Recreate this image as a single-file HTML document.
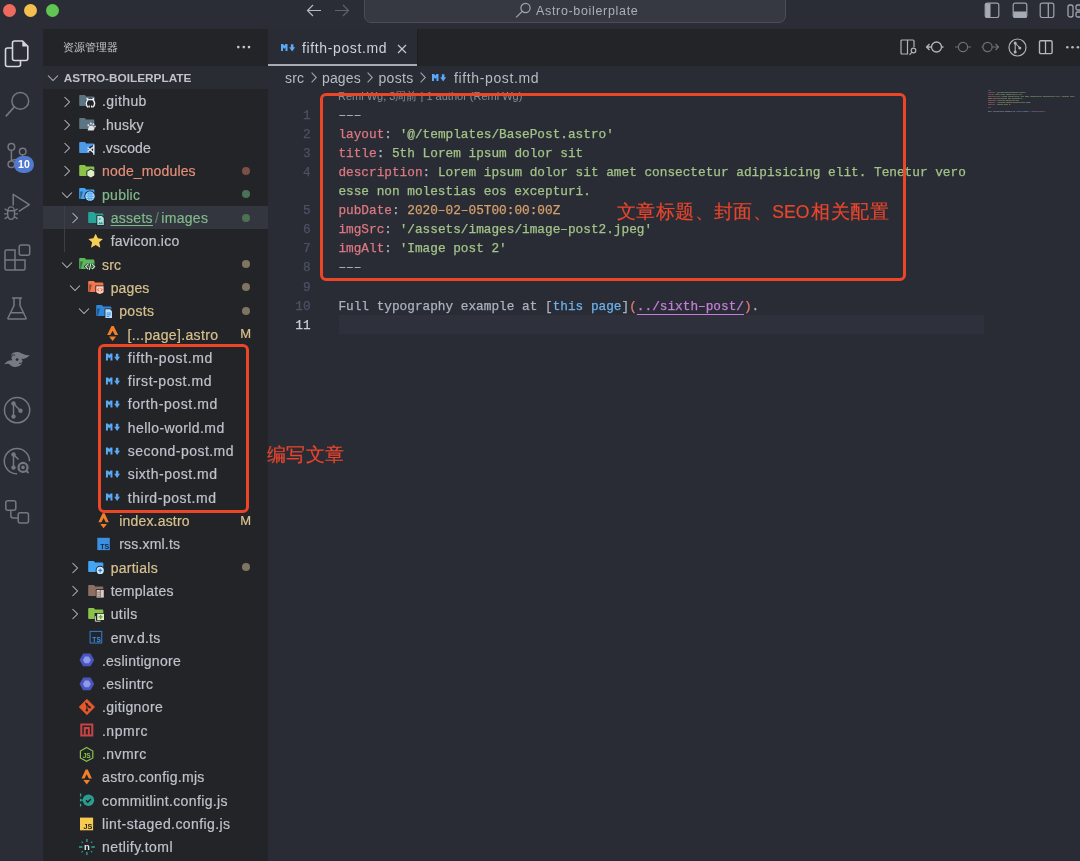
<!DOCTYPE html>
<html><head><meta charset="utf-8"><style>
*{margin:0;padding:0;box-sizing:border-box}
html,body{width:1080px;height:861px;overflow:hidden;background:#292c35;font-family:"Liberation Sans",sans-serif}
.a{position:absolute}
#root{position:absolute;left:0;top:0;width:1080px;height:861px;will-change:transform}
.ic{position:absolute;line-height:0}
.ic svg{display:block;overflow:visible}
.rt{position:absolute;font-size:14px;line-height:18px;white-space:pre;letter-spacing:0.5px;-webkit-text-stroke:0.2px currentColor}
.ln{position:absolute;left:279.6px;width:31px;text-align:right;font-family:"Liberation Mono",monospace;font-size:12.76px;line-height:19px;white-space:pre;-webkit-text-stroke:0.25px currentColor}
.cl{position:absolute;left:338.4px;font-family:"Liberation Mono",monospace;font-size:12.76px;line-height:19px;white-space:pre;-webkit-text-stroke:0.25px currentColor}
.ab svg{position:absolute;overflow:visible}
</style></head><body><div id="root">
<!-- title bar -->
<div class="a" style="left:0;top:0;width:1080px;height:29px;background:#2a2d36"></div>
<div class="a" style="left:3px;top:4px;width:13px;height:13px;border-radius:50%;background:#ee6a5f"></div>
<div class="a" style="left:24px;top:4px;width:13px;height:13px;border-radius:50%;background:#f5bf4f"></div>
<div class="a" style="left:45.5px;top:4px;width:13px;height:13px;border-radius:50%;background:#61c554"></div>
<svg class="a" style="left:306px;top:4px" width="16" height="13" viewBox="0 0 16 13"><path d="M1.5 6.5H15M7 1 1.5 6.5 7 12" fill="none" stroke="#b5b8bf" stroke-width="1.2"/></svg>
<svg class="a" style="left:334px;top:4px" width="16" height="13" viewBox="0 0 16 13"><path d="M1 6.5H14.5M9 1 14.5 6.5 9 12" fill="none" stroke="#5f626a" stroke-width="1.2"/></svg>
<div class="a" style="left:364px;top:-8px;width:422px;height:31px;border-radius:7px;background:#363942;border:1px solid #4a4d55"></div>
<svg class="a" style="left:515px;top:2px" width="17" height="16" viewBox="0 0 17 16"><circle cx="10.5" cy="6" r="4.6" fill="none" stroke="#a2a5ad" stroke-width="1.2"/><path d="M7.2 9.3 1.2 15.3" stroke="#a2a5ad" stroke-width="1.2"/></svg>
<div class="a" style="left:536px;top:3px;font-size:12.5px;line-height:16px;color:#acafb7;letter-spacing:0.67px">Astro-boilerplate</div>
<!-- layout icons -->
<svg class="a" style="left:984px;top:2px" width="16" height="16" viewBox="0 0 16 16"><rect x="1.2" y="1.2" width="13.6" height="14.3" rx="2" fill="none" stroke="#9fa3ad" stroke-width="1.2"/><path d="M1.5 1.5H6.5V15.5H1.5Z" fill="#a6aab5"/></svg>
<svg class="a" style="left:1012px;top:2px" width="16" height="16" viewBox="0 0 16 16"><rect x="1.2" y="1.2" width="13.6" height="14.3" rx="2" fill="none" stroke="#9fa3ad" stroke-width="1.2"/><path d="M1.5 9.5H14.5V15.5H1.5Z" fill="#a6aab5"/></svg>
<svg class="a" style="left:1039px;top:2px" width="16" height="16" viewBox="0 0 16 16"><rect x="1.2" y="1.2" width="13.6" height="14.3" rx="2" fill="none" stroke="#9fa3ad" stroke-width="1.2"/><path d="M9.3 1V16" stroke="#9fa3ad" stroke-width="1.3"/></svg>
<svg class="a" style="left:1067px;top:2px" width="16" height="16" viewBox="0 0 16 16"><rect x="1" y="3" width="5" height="12" rx="2" fill="none" stroke="#9fa3ad" stroke-width="1.3"/><rect x="9" y="3" width="7" height="5" rx="1.5" fill="none" stroke="#9fa3ad" stroke-width="1.3"/><rect x="9" y="10" width="7" height="5" rx="1.5" fill="none" stroke="#9fa3ad" stroke-width="1.3"/></svg>

<!-- activity bar -->
<div class="a" style="left:0;top:29px;width:43px;height:832px;background:#2a2d36"></div>
<div class="ab">
<svg style="left:4px;top:40px" width="25" height="28" viewBox="0 0 25 28"><path d="M8.6 8H3.5Q1.5 8 1.5 10V24.5Q1.5 26.5 3.5 26.5H14.5Q16.5 26.5 16.5 24.5V20.5" fill="none" stroke="#d6d7da" stroke-width="1.6"/><path d="M10.5 1H18.5L23.8 6.3V18.5Q23.8 20.5 21.8 20.5H10.5Q8.5 20.5 8.5 18.5V3Q8.5 1 10.5 1Z" fill="none" stroke="#d6d7da" stroke-width="1.6"/><path d="M18.3 1.5V6.5H23.3Z" fill="#d6d7da"/></svg>
<svg style="left:4px;top:90px" width="26" height="28" viewBox="0 0 26 28"><circle cx="16.3" cy="10.9" r="8.4" fill="none" stroke="#75787f" stroke-width="1.5"/><path d="M10.3 16.9 1.8 26.4" stroke="#75787f" stroke-width="1.6"/></svg>
<svg style="left:6px;top:140px" width="24" height="28" viewBox="0 0 24 28"><circle cx="5.4" cy="6.9" r="3.3" fill="none" stroke="#75787f" stroke-width="1.5"/><circle cx="16.7" cy="11.5" r="3.3" fill="none" stroke="#75787f" stroke-width="1.5"/><circle cx="5.4" cy="24.3" r="3.3" fill="none" stroke="#75787f" stroke-width="1.5"/><path d="M5.4 10.2V21M16.7 14.8Q16.7 19 11 19.5 5.4 20 5.4 21" fill="none" stroke="#75787f" stroke-width="1.5"/></svg>
<div class="a" style="left:14.2px;top:155.8px;width:19.8px;height:17.2px;border-radius:9px;background:#5179cf;color:#fff;font-size:10.5px;font-weight:700;line-height:17.2px;text-align:center;letter-spacing:0.2px">10</div>
<svg style="left:3px;top:193px" width="28" height="28" viewBox="0 0 28 28"><path d="M10.2 12.6V1.3L26.3 11.7 15.8 18.4" fill="none" stroke="#75787f" stroke-width="1.5" stroke-linejoin="round"/><path d="M4.9 17.8A3.2 3.9 0 0 1 11.3 17.8M4.1 17.8H12.1M4.7 17.8V21.6A3.4 4.8 0 0 0 11.5 21.6V17.8M1.6 15.7 4.4 17.8M1.2 20.9H4.4M1.6 25.8 4.5 23.9M14.6 15.7 11.8 17.8M15 20.9H11.8M14.6 25.8 11.7 23.9" fill="none" stroke="#75787f" stroke-width="1.4"/></svg>
<svg style="left:4px;top:244px" width="27" height="28" viewBox="0 0 27 28"><path d="M2.5 6H10.5V16H20.5V24.5Q20.5 26 19 26H2Q0.5 26 0.5 24.5V7.5Q0.5 6 2 6Z" fill="none" stroke="#75787f" stroke-width="1.5" transform="translate(0.5 0)"/><path d="M1 16H11M11 16V26" stroke="#75787f" stroke-width="1.5"/><rect x="15.2" y="1" width="10.5" height="10.3" rx="2" fill="none" stroke="#75787f" stroke-width="1.5"/></svg>
<svg style="left:7px;top:296px" width="22" height="26" viewBox="0 0 22 26"><path d="M5 2H15M7 2V9.5L1 22Q0.5 23 1.5 23H18.5Q19.5 23 19 22L13 9.5V2M3.5 16.8H16.5" fill="none" stroke="#75787f" stroke-width="1.5"/></svg>
<svg style="left:0px;top:345px" width="36" height="30" viewBox="0 0 36 30"><path d="M10.8 10.8C12 7.2 15.5 6.7 18 7C21.5 7.5 24.5 11 29.6 10.1C27.8 12.8 25 14.3 21.3 13.8C23.5 16 22 19.5 20 20.6C17 22.8 12.5 22.2 10.5 20.2C8.5 18.2 6.5 18.6 4.2 19.5C6 16.5 9 15 12.5 15.3C11 13.5 11 12 12.8 10.5C12 10.4 11.3 10.5 10.8 10.8Z" fill="#777a82"/><circle cx="17.1" cy="14.6" r="1.4" fill="#2a2d36"/><path d="M11.8 10.4Q13.5 9.6 15.2 10.2M19 18.4Q20.8 18.6 22.4 17.6" fill="none" stroke="#2a2d36" stroke-width="0.9"/></svg>
<svg style="left:3px;top:396px" width="28" height="28" viewBox="0 0 28 28"><circle cx="14.1" cy="14.2" r="12.6" fill="none" stroke="#75787f" stroke-width="1.5"/><circle cx="10.5" cy="7.4" r="2.2" fill="#75787f"/><circle cx="10.5" cy="20.6" r="2.2" fill="#75787f"/><circle cx="17.5" cy="14.8" r="2.2" fill="#75787f"/><path d="M10.5 7.4V20.6M10.5 7.4 17.5 14.8" stroke="#75787f" stroke-width="1.5"/></svg>
<svg style="left:3px;top:447px" width="28" height="28" viewBox="0 0 28 28"><path d="M26.5 14.2A12.6 12.6 0 1 0 14.1 26.8" fill="none" stroke="#75787f" stroke-width="1.5"/><circle cx="10.5" cy="7.4" r="2.2" fill="#75787f"/><circle cx="10.5" cy="20.6" r="2.2" fill="#75787f"/><path d="M10.5 7.4V20.6M10.5 7.4 15.5 12.5" stroke="#75787f" stroke-width="1.5"/><circle cx="20" cy="20.4" r="4.5" fill="none" stroke="#75787f" stroke-width="2.2"/><circle cx="20" cy="20.4" r="1.8" fill="#75787f"/><path d="M23 23.5 25.5 26" stroke="#75787f" stroke-width="1.8"/></svg>
<svg style="left:5px;top:500px" width="25" height="25" viewBox="0 0 25 25"><rect x="0.8" y="0.8" width="10" height="9.5" rx="2" fill="none" stroke="#75787f" stroke-width="1.5"/><rect x="13.2" y="12.8" width="10.3" height="10.3" rx="2" fill="none" stroke="#75787f" stroke-width="1.5"/><path d="M5.8 10.3V15.5Q5.8 18 8.3 18H13.2" fill="none" stroke="#75787f" stroke-width="1.5"/></svg>
</div>

<!-- sidebar -->
<div class="a" style="left:43px;top:29px;width:225px;height:832px;background:#222428"></div>
<div class="a" style="left:63.4px;top:39.3px;font-size:11.45px;line-height:16px;color:#c4c6cc">资源管理器</div>
<svg class="a" style="left:230px;top:40px" width="26" height="14" viewBox="0 0 26 14"><circle cx="8.3" cy="7.1" r="1.3" fill="#c8cad0"/><circle cx="13.8" cy="7.1" r="1.3" fill="#c8cad0"/><circle cx="19" cy="7.1" r="1.3" fill="#c8cad0"/></svg>
<div class="a" style="left:43px;top:65.8px;width:225px;height:23.6px;background:#2a2c33"></div>
<div class="ic" style="left:47px;top:73.5px"><svg width="12" height="8" viewBox="0 0 12 8"><path d="M1 1.5 6 6.5 11 1.5" fill="none" stroke="#b4b6bc" stroke-width="1.05"/></svg></div>
<div class="a" style="left:63.8px;top:70px;font-size:11.8px;font-weight:700;line-height:16px;color:#c0c2c8">ASTRO-BOILERPLATE</div>
<div class="ic" style="left:62.70px;top:95.50px"><svg width="8" height="12" viewBox="0 0 8 12"><path d="M1.5 1 6.5 6 1.5 11" fill="none" stroke="#b4b6bc" stroke-width="1.05"/></svg></div><div class="ic" style="left:79.10px;top:93.00px"><svg width="20" height="16" viewBox="0 0 20 16"><path d="M0.2 2.9Q0.2 2.1 1 2.1H5.8L7.1 3.4H14.5Q15.3 3.4 15.3 4.2V12.2Q15.3 13 14.5 13H1Q0.2 13 0.2 12.2Z" fill="#5d7482"/><circle cx="11.4" cy="10" r="5.3" fill="#222428"/><path d="M9.3 14.2Q7.2 13.2 7.2 10.4Q7.2 8.6 8.4 7.5L8.3 5.7 9.9 6.6Q11.4 6.2 12.9 6.6L14.5 5.7 14.4 7.5Q15.6 8.6 15.6 10.4Q15.6 13.2 13.5 14.2" fill="none" stroke="#eef0f3" stroke-width="1.5"/><path d="M10.2 14.5V12.6M12.6 14.5V12.6" stroke="#eef0f3" stroke-width="1.3"/></svg></div><div class="rt" style="left:101.90px;top:92.40px;color:#bfc2ca;letter-spacing:0.409px">.github</div><div class="ic" style="left:62.70px;top:118.81px"><svg width="8" height="12" viewBox="0 0 8 12"><path d="M1.5 1 6.5 6 1.5 11" fill="none" stroke="#b4b6bc" stroke-width="1.05"/></svg></div><div class="ic" style="left:79.10px;top:116.31px"><svg width="20" height="16" viewBox="0 0 20 16"><path d="M0.2 2.9Q0.2 2.1 1 2.1H5.8L7.1 3.4H14.5Q15.3 3.4 15.3 4.2V12.2Q15.3 13 14.5 13H1Q0.2 13 0.2 12.2Z" fill="#5d7482"/><path d="M8.6 14.6 10 10.2 13.2 9.6 15.8 11.8 14.6 14.6Z" fill="#e0e3e6"/><circle cx="9.4" cy="9.2" r="1" fill="#e0e3e6"/><circle cx="11.8" cy="7.6" r="1" fill="#e0e3e6"/><circle cx="14.4" cy="8.2" r="1" fill="#e0e3e6"/><circle cx="16" cy="10.4" r="0.9" fill="#e0e3e6"/></svg></div><div class="rt" style="left:101.90px;top:115.71px;color:#bfc2ca;letter-spacing:0.228px">.husky</div><div class="ic" style="left:62.70px;top:142.12px"><svg width="8" height="12" viewBox="0 0 8 12"><path d="M1.5 1 6.5 6 1.5 11" fill="none" stroke="#b4b6bc" stroke-width="1.05"/></svg></div><div class="ic" style="left:79.10px;top:139.62px"><svg width="20" height="16" viewBox="0 0 20 16"><path d="M0.2 2.9Q0.2 2.1 1 2.1H5.8L7.1 3.4H14.5Q15.3 3.4 15.3 4.2V12.2Q15.3 13 14.5 13H1Q0.2 13 0.2 12.2Z" fill="#4d9be8"/><path d="M9 7.8 15.6 4.2V15.2L9 11.8Z" fill="#222428"/><path d="M8.6 11.6 14.8 6.6M8.6 7.6 14.8 12.8M14.8 4.6V14.8" stroke="#dfeafb" stroke-width="1.4" fill="none"/></svg></div><div class="rt" style="left:101.90px;top:139.02px;color:#bfc2ca;letter-spacing:0.09px">.vscode</div><div class="ic" style="left:62.70px;top:165.43px"><svg width="8" height="12" viewBox="0 0 8 12"><path d="M1.5 1 6.5 6 1.5 11" fill="none" stroke="#b4b6bc" stroke-width="1.05"/></svg></div><div class="ic" style="left:79.10px;top:162.93px"><svg width="20" height="16" viewBox="0 0 20 16"><path d="M0.2 2.9Q0.2 2.1 1 2.1H5.8L7.1 3.4H14.5Q15.3 3.4 15.3 4.2V12.2Q15.3 13 14.5 13H1Q0.2 13 0.2 12.2Z" fill="#8bc34a"/><path d="M11.8 5.6 16.2 8.1V13.1L11.8 15.6 7.4 13.1V8.1Z" fill="#222428"/><path d="M11.8 6.6 15.3 8.6V12.6L11.8 14.6 8.3 12.6V8.6Z" fill="#dcedc8"/></svg></div><div class="rt" style="left:102.10px;top:162.33px;color:#e58e78;letter-spacing:0.15px">node_modules</div><div style="position:absolute;left:242px;top:166.93px;width:8px;height:8px;border-radius:50%;background:#7d4f49"></div><div class="ic" style="left:60.50px;top:190.74px"><svg width="12" height="8" viewBox="0 0 12 8"><path d="M1 1.5 6 6.5 11 1.5" fill="none" stroke="#b4b6bc" stroke-width="1.05"/></svg></div><div class="ic" style="left:79.10px;top:186.24px"><svg width="20" height="16" viewBox="0 0 20 16"><path d="M0.2 2.9Q0.2 2.1 1 2.1H5.8L7.1 3.4H14.5Q15.3 3.4 15.3 4.2V12.2Q15.3 13 14.5 13H1Q0.2 13 0.2 12.2Z" fill="#42a5f5"/><path d="M1.2 5.4H4.4L2.1 13H1.2Z" fill="#15171a" opacity="0.45"/><path d="M3.9 5.4H15.3V12.2Q15.3 13 14.5 13H2Z" fill="#42a5f5"/><circle cx="11" cy="10.2" r="5.6" fill="#222428"/><circle cx="11" cy="10.2" r="4.7" fill="#d2e7fb"/><path d="M6.3 10.2H15.7M11 5.5V14.9M7 7.8H15M7 12.6H15" stroke="#42a5f5" stroke-width="0.9"/><ellipse cx="11" cy="10.2" rx="2" ry="4.6" fill="none" stroke="#42a5f5" stroke-width="0.9"/></svg></div><div class="rt" style="left:102.10px;top:185.64px;color:#81b88b;letter-spacing:0.244px">public</div><div style="position:absolute;left:242px;top:190.24px;width:8px;height:8px;border-radius:50%;background:#4d7157"></div><div style="position:absolute;left:43px;top:205.95px;width:225px;height:23.31px;background:#33363e"></div><div class="ic" style="left:71.25px;top:212.05px"><svg width="8" height="12" viewBox="0 0 8 12"><path d="M1.5 1 6.5 6 1.5 11" fill="none" stroke="#b4b6bc" stroke-width="1.05"/></svg></div><div class="ic" style="left:87.65px;top:209.55px"><svg width="20" height="16" viewBox="0 0 20 16"><path d="M0.2 2.9Q0.2 2.1 1 2.1H5.8L7.1 3.4H14.5Q15.3 3.4 15.3 4.2V12.2Q15.3 13 14.5 13H1Q0.2 13 0.2 12.2Z" fill="#26a69a"/><path d="M8.4 5.2H14.2L16.6 7.6V15.8H8.4Z" fill="#222428"/><path d="M9.3 6H13.8L15.8 8V15H9.3Z" fill="#b2dfdb"/><path d="M10 14.2 11.6 11.8 12.8 13 13.8 11.6 15.1 14.2Z" fill="#26a69a"/><circle cx="11.8" cy="9" r="1" fill="#26a69a"/></svg></div><div class="rt" style="left:110.65px;top:208.95px;color:#81b88b;letter-spacing:0.3px"><span style="text-decoration:underline;text-underline-offset:2px;text-decoration-thickness:1px">assets</span><span style="color:#5f7d66;margin:0 2.2px 0 2px">/</span>images</div><div style="position:absolute;left:242px;top:213.55px;width:8px;height:8px;border-radius:50%;background:#4d7157"></div><div class="ic" style="left:87.65px;top:232.86px"><svg width="20" height="16" viewBox="0 0 20 16"><path d="M7.65 0.7 9.9 5.3 14.95 5.9 11.2 9.3 12.3 14.8 7.65 12.1 3 14.8 4.1 9.3 0.35 5.9 5.4 5.3Z" fill="#f6ce55"/></svg></div><div class="rt" style="left:110.65px;top:232.26px;color:#bfc2ca;letter-spacing:0.244px">favicon.ico</div><div class="ic" style="left:60.50px;top:260.67px"><svg width="12" height="8" viewBox="0 0 12 8"><path d="M1 1.5 6 6.5 11 1.5" fill="none" stroke="#b4b6bc" stroke-width="1.05"/></svg></div><div class="ic" style="left:79.10px;top:256.17px"><svg width="20" height="16" viewBox="0 0 20 16"><path d="M0.2 2.9Q0.2 2.1 1 2.1H5.8L7.1 3.4H14.5Q15.3 3.4 15.3 4.2V12.2Q15.3 13 14.5 13H1Q0.2 13 0.2 12.2Z" fill="#5cb85c"/><path d="M1.2 5.4H4.4L2.1 13H1.2Z" fill="#15171a" opacity="0.45"/><path d="M3.9 5.4H15.3V12.2Q15.3 13 14.5 13H2Z" fill="#5cb85c"/><path d="M9 8.2 6.6 10.6 9 13M13.2 8.2 15.6 10.6 13.2 13M11.9 7.4 10.3 13.8" stroke="#222428" stroke-width="2.6" fill="none"/><path d="M9 8.2 6.6 10.6 9 13M13.2 8.2 15.6 10.6 13.2 13M11.9 7.4 10.3 13.8" stroke="#c8e6c9" stroke-width="1.2" fill="none"/></svg></div><div class="rt" style="left:102.10px;top:255.57px;color:#d7c08d;letter-spacing:0.169px">src</div><div style="position:absolute;left:242px;top:260.17px;width:8px;height:8px;border-radius:50%;background:#7f7461"></div><div class="ic" style="left:69.05px;top:283.98px"><svg width="12" height="8" viewBox="0 0 12 8"><path d="M1 1.5 6 6.5 11 1.5" fill="none" stroke="#b4b6bc" stroke-width="1.05"/></svg></div><div class="ic" style="left:87.65px;top:279.48px"><svg width="20" height="16" viewBox="0 0 20 16"><path d="M0.2 2.9Q0.2 2.1 1 2.1H5.8L7.1 3.4H14.5Q15.3 3.4 15.3 4.2V12.2Q15.3 13 14.5 13H1Q0.2 13 0.2 12.2Z" fill="#f4774f"/><path d="M1.2 5.4H4.4L2.1 13H1.2Z" fill="#15171a" opacity="0.45"/><path d="M3.9 5.4H15.3V12.2Q15.3 13 14.5 13H2Z" fill="#f4774f"/><path d="M7.4 6.4H16.4V13.2Q15.8 14.6 11.9 15.8 8 14.6 7.4 13.2Z" fill="#222428"/><path d="M8.2 7.2H15.6V13Q15.2 14 11.9 15 8.6 14 8.2 13Z" fill="#ffccbc"/><path d="M11 9.3 9.5 10.8 11 12.3M12.8 9.3 14.3 10.8 12.8 12.3" stroke="#e64a19" stroke-width="1" fill="none"/></svg></div><div class="rt" style="left:110.65px;top:278.88px;color:#d7c08d;letter-spacing:0.139px">pages</div><div style="position:absolute;left:242px;top:283.48px;width:8px;height:8px;border-radius:50%;background:#7f7461"></div><div class="ic" style="left:77.60px;top:307.29px"><svg width="12" height="8" viewBox="0 0 12 8"><path d="M1 1.5 6 6.5 11 1.5" fill="none" stroke="#b4b6bc" stroke-width="1.05"/></svg></div><div class="ic" style="left:96.20px;top:302.79px"><svg width="20" height="16" viewBox="0 0 20 16"><path d="M0.2 2.9Q0.2 2.1 1 2.1H5.8L7.1 3.4H14.5Q15.3 3.4 15.3 4.2V12.2Q15.3 13 14.5 13H1Q0.2 13 0.2 12.2Z" fill="#2f86d9"/><path d="M1.2 5.4H4.4L2.1 13H1.2Z" fill="#15171a" opacity="0.45"/><path d="M3.9 5.4H15.3V12.2Q15.3 13 14.5 13H2Z" fill="#2f86d9"/><path d="M8.6 5.4H14.4L16.8 7.8V15.8H8.6Z" fill="#222428"/><path d="M9.4 6.2H14L16 8.2V15H9.4Z" fill="#bbdefb"/><path d="M10.6 10H14.8M10.6 11.8H14.8M10.6 13.5H13.2" stroke="#1e88e5" stroke-width="0.9"/></svg></div><div class="rt" style="left:119.20px;top:302.19px;color:#d7c08d;letter-spacing:0.31px">posts</div><div style="position:absolute;left:242px;top:306.79px;width:8px;height:8px;border-radius:50%;background:#7f7461"></div><div class="ic" style="left:104.75px;top:326.10px"><svg width="20" height="16" viewBox="0 0 20 16"><path d="M6.50 0.00H8.70L13.10 8.90H9.90L7.60 4.80 5.30 8.90H2.10Z" fill="#f47f2a"/><path d="M4.10 10.60H11.10L7.60 15.00Z" fill="#f47f2a"/></svg></div><div class="rt" style="left:127.55px;top:325.50px;color:#d7c08d;letter-spacing:0.341px">[...page].astro</div><div class="rt" style="left:240.3px;top:325.10px;color:#d7c08d;font-size:13px">M</div><div class="ic" style="left:104.75px;top:349.41px"><svg width="20" height="16" viewBox="0 0 20 16"><path d="M0.95 4.5H2.95L4.2 6.1 5.45 4.5H7.45V11.5H5.45V7.9L4.2 9.5 2.95 7.9V11.5H0.95Z" fill="#5ba8f5"/><path d="M10.85 4.8H13.35V7.7H15.05L12.1 12.1 9.15 7.7H10.85Z" fill="#5ba8f5"/></svg></div><div class="rt" style="left:127.75px;top:348.81px;color:#bfc2ca;letter-spacing:0.63px">fifth-post.md</div><div class="ic" style="left:104.75px;top:372.72px"><svg width="20" height="16" viewBox="0 0 20 16"><path d="M0.95 4.5H2.95L4.2 6.1 5.45 4.5H7.45V11.5H5.45V7.9L4.2 9.5 2.95 7.9V11.5H0.95Z" fill="#5ba8f5"/><path d="M10.85 4.8H13.35V7.7H15.05L12.1 12.1 9.15 7.7H10.85Z" fill="#5ba8f5"/></svg></div><div class="rt" style="left:127.75px;top:372.12px;color:#bfc2ca;letter-spacing:0.556px">first-post.md</div><div class="ic" style="left:104.75px;top:396.03px"><svg width="20" height="16" viewBox="0 0 20 16"><path d="M0.95 4.5H2.95L4.2 6.1 5.45 4.5H7.45V11.5H5.45V7.9L4.2 9.5 2.95 7.9V11.5H0.95Z" fill="#5ba8f5"/><path d="M10.85 4.8H13.35V7.7H15.05L12.1 12.1 9.15 7.7H10.85Z" fill="#5ba8f5"/></svg></div><div class="rt" style="left:127.75px;top:395.43px;color:#bfc2ca;letter-spacing:0.593px">forth-post.md</div><div class="ic" style="left:104.75px;top:419.34px"><svg width="20" height="16" viewBox="0 0 20 16"><path d="M0.95 4.5H2.95L4.2 6.1 5.45 4.5H7.45V11.5H5.45V7.9L4.2 9.5 2.95 7.9V11.5H0.95Z" fill="#5ba8f5"/><path d="M10.85 4.8H13.35V7.7H15.05L12.1 12.1 9.15 7.7H10.85Z" fill="#5ba8f5"/></svg></div><div class="rt" style="left:127.75px;top:418.74px;color:#bfc2ca;letter-spacing:0.419px">hello-world.md</div><div class="ic" style="left:104.75px;top:442.65px"><svg width="20" height="16" viewBox="0 0 20 16"><path d="M0.95 4.5H2.95L4.2 6.1 5.45 4.5H7.45V11.5H5.45V7.9L4.2 9.5 2.95 7.9V11.5H0.95Z" fill="#5ba8f5"/><path d="M10.85 4.8H13.35V7.7H15.05L12.1 12.1 9.15 7.7H10.85Z" fill="#5ba8f5"/></svg></div><div class="rt" style="left:127.75px;top:442.05px;color:#bfc2ca;letter-spacing:0.475px">second-post.md</div><div class="ic" style="left:104.75px;top:465.96px"><svg width="20" height="16" viewBox="0 0 20 16"><path d="M0.95 4.5H2.95L4.2 6.1 5.45 4.5H7.45V11.5H5.45V7.9L4.2 9.5 2.95 7.9V11.5H0.95Z" fill="#5ba8f5"/><path d="M10.85 4.8H13.35V7.7H15.05L12.1 12.1 9.15 7.7H10.85Z" fill="#5ba8f5"/></svg></div><div class="rt" style="left:127.75px;top:465.36px;color:#bfc2ca;letter-spacing:0.495px">sixth-post.md</div><div class="ic" style="left:104.75px;top:489.27px"><svg width="20" height="16" viewBox="0 0 20 16"><path d="M0.95 4.5H2.95L4.2 6.1 5.45 4.5H7.45V11.5H5.45V7.9L4.2 9.5 2.95 7.9V11.5H0.95Z" fill="#5ba8f5"/><path d="M10.85 4.8H13.35V7.7H15.05L12.1 12.1 9.15 7.7H10.85Z" fill="#5ba8f5"/></svg></div><div class="rt" style="left:127.75px;top:488.67px;color:#bfc2ca;letter-spacing:0.541px">third-post.md</div><div class="ic" style="left:96.20px;top:512.58px"><svg width="20" height="16" viewBox="0 0 20 16"><path d="M6.56 0.30H8.64L12.80 9.20H9.77L7.60 5.10 5.43 9.20H2.40Z" fill="#f47f2a"/><path d="M4.29 10.90H10.91L7.60 15.30Z" fill="#f47f2a"/></svg></div><div class="rt" style="left:119.20px;top:511.98px;color:#d7c08d;letter-spacing:0.19px">index.astro</div><div class="rt" style="left:240.3px;top:511.58px;color:#d7c08d;font-size:13px">M</div><div class="ic" style="left:96.20px;top:535.89px"><svg width="20" height="16" viewBox="0 0 20 16"><rect x="1.3" y="1.8" width="12.5" height="12.3" fill="#3d8fe0"/><text x="13.3" y="13.4" font-family="Liberation Sans" font-weight="700" font-size="7" fill="#0f2740" text-anchor="end">TS</text></svg></div><div class="rt" style="left:119.20px;top:535.29px;color:#bfc2ca;letter-spacing:0.188px">rss.xml.ts</div><div class="ic" style="left:71.25px;top:561.70px"><svg width="8" height="12" viewBox="0 0 8 12"><path d="M1.5 1 6.5 6 1.5 11" fill="none" stroke="#b4b6bc" stroke-width="1.05"/></svg></div><div class="ic" style="left:87.65px;top:559.20px"><svg width="20" height="16" viewBox="0 0 20 16"><path d="M0.2 2.9Q0.2 2.1 1 2.1H5.8L7.1 3.4H14.5Q15.3 3.4 15.3 4.2V12.2Q15.3 13 14.5 13H1Q0.2 13 0.2 12.2Z" fill="#42a5f5"/><circle cx="12.2" cy="11.4" r="4.6" fill="#222428"/><circle cx="12.2" cy="11.4" r="3.6" fill="#d2e7fb"/><path d="M12.2 9.4V13.4M10.2 11.4H14.2" stroke="#1e88e5" stroke-width="1.2"/></svg></div><div class="rt" style="left:110.65px;top:558.60px;color:#d7c08d;letter-spacing:0.267px">partials</div><div style="position:absolute;left:242px;top:563.20px;width:8px;height:8px;border-radius:50%;background:#7f7461"></div><div class="ic" style="left:71.25px;top:585.01px"><svg width="8" height="12" viewBox="0 0 8 12"><path d="M1.5 1 6.5 6 1.5 11" fill="none" stroke="#b4b6bc" stroke-width="1.05"/></svg></div><div class="ic" style="left:87.65px;top:582.51px"><svg width="20" height="16" viewBox="0 0 20 16"><path d="M0.2 2.9Q0.2 2.1 1 2.1H5.8L7.1 3.4H14.5Q15.3 3.4 15.3 4.2V12.2Q15.3 13 14.5 13H1Q0.2 13 0.2 12.2Z" fill="#8d6e63"/><path d="M7.8 6.2H16.6V15.4H7.8Z" fill="#222428"/><path d="M8.6 7H15.8V14.6H8.6Z" fill="#d7ccc8"/><path d="M8.6 9.2H12M8.6 11.2H12M8.6 13.2H12M12.4 7V14.6" stroke="#8d6e63" stroke-width="0.9"/></svg></div><div class="rt" style="left:110.65px;top:581.91px;color:#bfc2ca;letter-spacing:0.275px">templates</div><div class="ic" style="left:71.25px;top:608.32px"><svg width="8" height="12" viewBox="0 0 8 12"><path d="M1.5 1 6.5 6 1.5 11" fill="none" stroke="#b4b6bc" stroke-width="1.05"/></svg></div><div class="ic" style="left:87.65px;top:605.82px"><svg width="20" height="16" viewBox="0 0 20 16"><path d="M0.2 2.9Q0.2 2.1 1 2.1H5.8L7.1 3.4H14.5Q15.3 3.4 15.3 4.2V12.2Q15.3 13 14.5 13H1Q0.2 13 0.2 12.2Z" fill="#8bc34a"/><path d="M6.6 7H16.8V16H6.6Z" fill="#222428"/><path d="M7.4 10.2V15.2H12.6" fill="none" stroke="#dcedc8" stroke-width="0.9"/><path d="M9.2 7.8H16V14H9.2Z" fill="#dcedc8"/><path d="M12.6 8.9V12.9M10.6 10.9H14.6" stroke="#689f38" stroke-width="1.3"/></svg></div><div class="rt" style="left:110.65px;top:605.22px;color:#bfc2ca;letter-spacing:0.426px">utils</div><div class="ic" style="left:87.65px;top:629.13px"><svg width="20" height="16" viewBox="0 0 20 16"><rect x="2.1" y="2.4" width="11.6" height="11.6" fill="none" stroke="#3178c6" stroke-width="1.1"/><text x="12.8" y="12.9" font-family="Liberation Sans" font-weight="700" font-size="6.6" fill="#3d8fe0" text-anchor="end">TS</text></svg></div><div class="rt" style="left:110.65px;top:628.53px;color:#bfc2ca;letter-spacing:0.216px">env.d.ts</div><div class="ic" style="left:79.10px;top:652.44px"><svg width="20" height="16" viewBox="0 0 20 16"><path d="M4.2 1.6H11.5L15.2 7.95 11.5 14.3H4.2L0.5 7.95Z" fill="#4a55c0"/><path d="M5.9 4.6H9.8L11.8 7.95 9.8 11.3H5.9L3.9 7.95Z" fill="#8e9be8"/></svg></div><div class="rt" style="left:101.90px;top:651.84px;color:#bfc2ca;letter-spacing:0.275px">.eslintignore</div><div class="ic" style="left:79.10px;top:675.75px"><svg width="20" height="16" viewBox="0 0 20 16"><path d="M4.2 1.6H11.5L15.2 7.95 11.5 14.3H4.2L0.5 7.95Z" fill="#4a55c0"/><path d="M5.9 4.6H9.8L11.8 7.95 9.8 11.3H5.9L3.9 7.95Z" fill="#8e9be8"/></svg></div><div class="rt" style="left:101.90px;top:675.15px;color:#bfc2ca;letter-spacing:0.371px">.eslintrc</div><div class="ic" style="left:79.10px;top:699.06px"><svg width="20" height="16" viewBox="0 0 20 16"><path d="M7.9 0.3 15.6 8 7.9 15.7 0.2 8Z" fill="#e8582b" stroke="#e8582b" stroke-width="0.8" stroke-linejoin="round"/><path d="M6.2 3.6 7.9 5.3V11.2M7.9 5.3 10.6 8" stroke="#222428" stroke-width="1.1" fill="none"/><circle cx="7.9" cy="5.4" r="1.2" fill="#222428"/><circle cx="7.9" cy="11.2" r="1.2" fill="#222428"/><circle cx="10.6" cy="8.2" r="1.2" fill="#222428"/></svg></div><div class="rt" style="left:101.90px;top:698.46px;color:#bfc2ca;letter-spacing:0.355px">.gitignore</div><div class="ic" style="left:79.10px;top:722.37px"><svg width="20" height="16" viewBox="0 0 20 16"><path d="M2.3 2.6H13.3V13.4H2.3Z" fill="none" stroke="#c94343" stroke-width="2"/><path d="M5.8 13.4V6.1H9.8V13.4" fill="none" stroke="#c94343" stroke-width="2"/></svg></div><div class="rt" style="left:101.90px;top:721.77px;color:#bfc2ca;letter-spacing:0.563px">.npmrc</div><div class="ic" style="left:79.10px;top:745.68px"><svg width="20" height="16" viewBox="0 0 20 16"><path d="M7.6 1.5 13.8 5V12L7.6 15.4 1.4 12V5Z" fill="none" stroke="#8bc34a" stroke-width="1.2"/><text x="7.7" y="11.6" font-family="Liberation Sans" font-weight="700" font-size="6.6" fill="#8bc34a" text-anchor="middle">JS</text></svg></div><div class="rt" style="left:101.90px;top:745.08px;color:#bfc2ca;letter-spacing:0.46px">.nvmrc</div><div class="ic" style="left:79.10px;top:768.99px"><svg width="20" height="16" viewBox="0 0 20 16"><path d="M6.66 0.50H8.74L12.90 9.40H9.87L7.70 5.30 5.53 9.40H2.50Z" fill="#f47f2a"/><path d="M4.39 11.10H11.01L7.70 15.50Z" fill="#f47f2a"/></svg></div><div class="rt" style="left:102.10px;top:768.39px;color:#bfc2ca;letter-spacing:0.278px">astro.config.mjs</div><div class="ic" style="left:79.10px;top:792.30px"><svg width="20" height="16" viewBox="0 0 20 16"><path d="M1.6 1.5V4.5M1.6 6.8V9.6M1.6 11.8V14.5M1.6 8.2H4" stroke="#26a69a" stroke-width="1.3"/><circle cx="9.4" cy="8.2" r="5.8" fill="#2a9d8f"/><path d="M7 8.4 8.8 10.1 11.9 6.9" stroke="#222428" stroke-width="1.5" fill="none"/></svg></div><div class="rt" style="left:102.10px;top:791.70px;color:#bfc2ca;letter-spacing:0.381px">commitlint.config.js</div><div class="ic" style="left:79.10px;top:815.61px"><svg width="20" height="16" viewBox="0 0 20 16"><rect x="1" y="1.6" width="13.1" height="12.7" fill="#f7cb4f"/><text x="13.2" y="13.4" font-family="Liberation Sans" font-weight="700" font-size="7.2" fill="#2a2410" text-anchor="end">JS</text></svg></div><div class="rt" style="left:102.10px;top:815.01px;color:#bfc2ca;letter-spacing:0.403px">lint-staged.config.js</div><div class="ic" style="left:79.10px;top:838.92px"><svg width="20" height="16" viewBox="0 0 20 16"><path d="M0 8H3.4M12.4 8H15.8M7.9 0V3M7.9 13V16" stroke="#2fa797" stroke-width="1.3"/><path d="M2.6 2.6 3.8 3.8M13.2 2.6 12 3.8M2.6 13.4 3.8 12.2M13.2 13.4 12 12.2" stroke="#2fa797" stroke-width="1.1"/><text x="7.9" y="11.2" font-family="Liberation Sans" font-weight="700" font-size="9.5" fill="#e6e6e6" text-anchor="middle">n</text></svg></div><div class="rt" style="left:102.10px;top:838.32px;color:#bfc2ca;letter-spacing:0.413px">netlify.toml</div>
<div class="a" style="left:64px;top:206px;width:1px;height:46px;background:#3c3f46"></div>

<!-- tab bar -->
<div class="a" style="left:268px;top:29px;width:812px;height:37px;background:#222428"></div>
<div class="a" style="left:268px;top:29px;width:149px;height:37px;background:#292c35;border-bottom:2px solid #a9abb0"></div><div class="a" style="left:417px;top:29px;width:1.2px;height:37px;background:#1d1f23"></div>
<div class="ic" style="left:280.5px;top:44px"><svg width="15" height="8" viewBox="0 0 15 8"><path d="M0 0H2L3.25 1.6 4.5 0H6.5V7H4.5V3.4L3.25 5 2 3.4V7H0Z" fill="#5ba8f5"/><path d="M9.9 0.3H12.4V3.2H14.1L11.15 7.6 8.2 3.2H9.9Z" fill="#5ba8f5"/></svg></div>
<div class="a" style="left:302px;top:39.5px;font-size:14px;line-height:16px;color:#d0d2d8;letter-spacing:0.63px">fifth-post.md</div>
<svg class="a" style="left:397px;top:43.5px" width="10" height="10" viewBox="0 0 10 10"><path d="M1 1 9 9M9 1 1 9" stroke="#c5c7cc" stroke-width="1.2"/></svg>
<!-- editor actions -->
<svg class="a" style="left:900px;top:39px" width="18" height="17" viewBox="0 0 18 17"><path d="M8 15H2Q1 15 1 14V2Q1 1 2 1H13Q14 1 14 2V8M7.5 1V15" fill="none" stroke="#b0b3ba" stroke-width="1.2"/><circle cx="13.5" cy="11.5" r="2.3" fill="none" stroke="#b0b3ba" stroke-width="1.2"/><path d="M11.8 13.3 9.5 15.8" stroke="#b0b3ba" stroke-width="1.2"/></svg>
<svg class="a" style="left:925px;top:39px" width="20" height="16" viewBox="0 0 20 16"><circle cx="11.5" cy="8" r="5" fill="none" stroke="#b0b3ba" stroke-width="1.3"/><path d="M6.5 8H1.5M4.5 5 1.5 8 4.5 11M16.5 8H18.5" fill="none" stroke="#b0b3ba" stroke-width="1.3"/></svg>
<svg class="a" style="left:954px;top:39px" width="18" height="16" viewBox="0 0 18 16"><circle cx="9" cy="8" r="4.6" fill="none" stroke="#6c6f76" stroke-width="1.2"/><path d="M4.4 8H1M13.6 8H17" stroke="#6c6f76" stroke-width="1.2"/></svg>
<svg class="a" style="left:981px;top:39px" width="19" height="16" viewBox="0 0 19 16"><circle cx="6.5" cy="8" r="4.6" fill="none" stroke="#6c6f76" stroke-width="1.2"/><path d="M11.1 8H17.5M14.5 5 17.5 8 14.5 11M1.9 8H0.5" fill="none" stroke="#6c6f76" stroke-width="1.2"/></svg>
<svg class="a" style="left:1008px;top:38px" width="19" height="19" viewBox="0 0 19 19"><circle cx="9.5" cy="9.5" r="8.5" fill="none" stroke="#b0b3ba" stroke-width="1.2"/><circle cx="7.2" cy="5" r="1.5" fill="#b0b3ba"/><circle cx="7.2" cy="14" r="1.5" fill="#b0b3ba"/><circle cx="11.8" cy="10" r="1.5" fill="#b0b3ba"/><path d="M7.2 5V14M7.2 5 11.8 10" stroke="#b0b3ba" stroke-width="1.1"/></svg>
<svg class="a" style="left:1038px;top:39px" width="16" height="16" viewBox="0 0 16 16"><rect x="1.5" y="1.7" width="12.6" height="12.9" rx="1.3" fill="none" stroke="#b5b7bc" stroke-width="1.4"/><path d="M7.5 1.7V14.6" stroke="#b5b7bc" stroke-width="1.3"/></svg>
<svg class="a" style="left:1060px;top:40px" width="26" height="14" viewBox="0 0 26 14"><circle cx="7.3" cy="7.2" r="1.3" fill="#b5b7bc"/><circle cx="12.5" cy="7.2" r="1.3" fill="#b5b7bc"/><circle cx="17.9" cy="7.2" r="1.3" fill="#b5b7bc"/></svg>

<!-- breadcrumbs -->
<div class="a" style="left:285px;top:69.5px;font-size:14px;line-height:16px;color:#b8bbc2;white-space:pre;letter-spacing:0.17px">src</div>
<svg class="a" style="left:311px;top:71.5px" width="6" height="11" viewBox="0 0 6 11"><path d="M0.6 0.6 5.3 5.5 0.6 10.4" fill="none" stroke="#a3a6ad" stroke-width="1.1"/></svg>
<div class="a" style="left:322px;top:69.5px;font-size:14px;line-height:16px;color:#b8bbc2;white-space:pre;letter-spacing:0.14px">pages</div>
<svg class="a" style="left:367px;top:71.5px" width="6" height="11" viewBox="0 0 6 11"><path d="M0.6 0.6 5.3 5.5 0.6 10.4" fill="none" stroke="#a3a6ad" stroke-width="1.1"/></svg>
<div class="a" style="left:378.5px;top:69.5px;font-size:14px;line-height:16px;color:#b8bbc2;white-space:pre;letter-spacing:0.31px">posts</div>
<svg class="a" style="left:420px;top:71.5px" width="6" height="11" viewBox="0 0 6 11"><path d="M0.6 0.6 5.3 5.5 0.6 10.4" fill="none" stroke="#a3a6ad" stroke-width="1.1"/></svg>
<div class="ic" style="left:432px;top:74px"><svg width="15" height="8" viewBox="0 0 15 8"><path d="M0 0H2L3.25 1.6 4.5 0H6.5V7H4.5V3.4L3.25 5 2 3.4V7H0Z" fill="#5ba8f5"/><path d="M9.9 0.3H12.4V3.2H14.1L11.15 7.6 8.2 3.2H9.9Z" fill="#5ba8f5"/></svg></div>
<div class="a" style="left:454px;top:69.5px;font-size:14px;line-height:16px;color:#b8bbc2;white-space:pre;letter-spacing:0.63px">fifth-post.md</div>

<!-- editor -->
<div class="a" style="left:339px;top:314.5px;width:645px;height:19.5px;background:#2e313b"></div>
<div class="a" style="left:338px;top:89px;font-size:11px;line-height:14px;color:#8a8d95;white-space:pre">Remi Wg, 3周前 | 1 author (Remi Wg)</div>
<div class="ln" style="top:105.60px;color:#4b5263">1</div><div class="cl" style="top:105.60px"><span style="color:#abb2bf">–––</span></div><div class="ln" style="top:124.70px;color:#4b5263">2</div><div class="cl" style="top:124.70px"><span style="color:#dc7880">layout</span><span style="color:#abb2bf">: </span><span style="color:#a3c388">'@/templates/BasePost.astro'</span></div><div class="ln" style="top:143.80px;color:#4b5263">3</div><div class="cl" style="top:143.80px"><span style="color:#dc7880">title</span><span style="color:#abb2bf">: </span><span style="color:#a3c388">5th Lorem ipsum dolor sit</span></div><div class="ln" style="top:162.90px;color:#4b5263">4</div><div class="cl" style="top:162.90px"><span style="color:#dc7880">description</span><span style="color:#abb2bf">: </span><span style="color:#a3c388">Lorem ipsum dolor sit amet consectetur adipisicing elit. Tenetur vero</span></div><div class="cl" style="top:182.00px"><span style="color:#a3c388">esse non molestias eos excepturi.</span></div><div class="ln" style="top:201.10px;color:#4b5263">5</div><div class="cl" style="top:201.10px"><span style="color:#dc7880">pubDate</span><span style="color:#abb2bf">: </span><span style="color:#d6a06c">2020–02–05T00:00:00Z</span></div><div class="ln" style="top:220.20px;color:#4b5263">6</div><div class="cl" style="top:220.20px"><span style="color:#dc7880">imgSrc</span><span style="color:#abb2bf">: </span><span style="color:#a3c388">'/assets/images/image–post2.jpeg'</span></div><div class="ln" style="top:239.30px;color:#4b5263">7</div><div class="cl" style="top:239.30px"><span style="color:#dc7880">imgAlt</span><span style="color:#abb2bf">: </span><span style="color:#a3c388">'Image post 2'</span></div><div class="ln" style="top:258.40px;color:#4b5263">8</div><div class="cl" style="top:258.40px"><span style="color:#abb2bf">–––</span></div><div class="ln" style="top:277.50px;color:#4b5263">9</div><div class="cl" style="top:277.50px"></div><div class="ln" style="top:296.60px;color:#4b5263">10</div><div class="cl" style="top:296.60px"><span style="color:#abb2bf">Full typography example at [</span><span style="color:#6cb1ea">this page</span><span style="color:#abb2bf">]</span><span style="color:#e07b70">(</span><span style="color:#c47fd9;text-decoration:underline;text-underline-offset:3.5px;text-decoration-thickness:1px">../sixth–post/</span><span style="color:#e07b70">)</span><span style="color:#abb2bf">.</span></div><div class="ln" style="top:315.70px;color:#c8ccd4">11</div><div class="cl" style="top:315.70px"></div>
<div style="position:absolute;left:988px;top:88.6px;width:800px;transform:scale(0.1377);transform-origin:0 0;font-family:'Liberation Mono',monospace;font-size:12.76px;line-height:15.47px;-webkit-text-stroke:1.6px currentColor;opacity:0.5"><div style="height:15.47px;white-space:pre"><span style="color:#abb2bf">–––</span></div><div style="height:15.47px;white-space:pre"><span style="color:#dc7880">layout</span><span style="color:#abb2bf">: </span><span style="color:#a3c388">'@/templates/BasePost.astro'</span></div><div style="height:15.47px;white-space:pre"><span style="color:#dc7880">title</span><span style="color:#abb2bf">: </span><span style="color:#a3c388">5th Lorem ipsum dolor sit</span></div><div style="height:15.47px;white-space:pre"><span style="color:#dc7880">description</span><span style="color:#abb2bf">: </span><span style="color:#a3c388">Lorem ipsum dolor sit amet consectetur adipisicing elit. Tenetur vero</span></div><div style="height:15.47px;white-space:pre"><span style="color:#a3c388">esse non molestias eos excepturi.</span></div><div style="height:15.47px;white-space:pre"><span style="color:#dc7880">pubDate</span><span style="color:#abb2bf">: </span><span style="color:#d6a06c">2020–02–05T00:00:00Z</span></div><div style="height:15.47px;white-space:pre"><span style="color:#dc7880">imgSrc</span><span style="color:#abb2bf">: </span><span style="color:#a3c388">'/assets/images/image–post2.jpeg'</span></div><div style="height:15.47px;white-space:pre"><span style="color:#dc7880">imgAlt</span><span style="color:#abb2bf">: </span><span style="color:#a3c388">'Image post 2'</span></div><div style="height:15.47px;white-space:pre"><span style="color:#abb2bf">–––</span></div><div style="height:15.47px;white-space:pre">&nbsp;</div><div style="height:15.47px;white-space:pre"><span style="color:#abb2bf">Full typography example at [</span><span style="color:#6cb1ea">this page</span><span style="color:#abb2bf">]</span><span style="color:#e07b70">(</span><span style="color:#c47fd9;;text-underline-offset:3.5px;text-decoration-thickness:1px">../sixth–post/</span><span style="color:#e07b70">)</span><span style="color:#abb2bf">.</span></div><div style="height:15.47px;white-space:pre">&nbsp;</div></div>

<!-- annotations -->
<div class="a" style="left:319.8px;top:93.2px;width:586.7px;height:187.8px;border:3.7px solid #ec4627;border-radius:6px"></div>
<div class="a" style="left:617px;top:200.8px;font-size:19px;line-height:22px;color:#e8452c;white-space:pre;letter-spacing:0.4px;-webkit-text-stroke:0.2px #e8452c">文章标题、封面、<span style="font-size:17.6px;letter-spacing:0;margin:0 2px 0 0">SEO</span>相关配置</div>
<div class="a" style="left:98.1px;top:343.8px;width:150.8px;height:169px;border:3.8px solid #ec4627;border-radius:6px"></div>
<div class="a" style="left:266.9px;top:443.3px;font-size:19px;line-height:24px;color:#e8452c;white-space:pre;letter-spacing:0.35px;-webkit-text-stroke:0.2px #e8452c">编写文章</div>
</div></body></html>
